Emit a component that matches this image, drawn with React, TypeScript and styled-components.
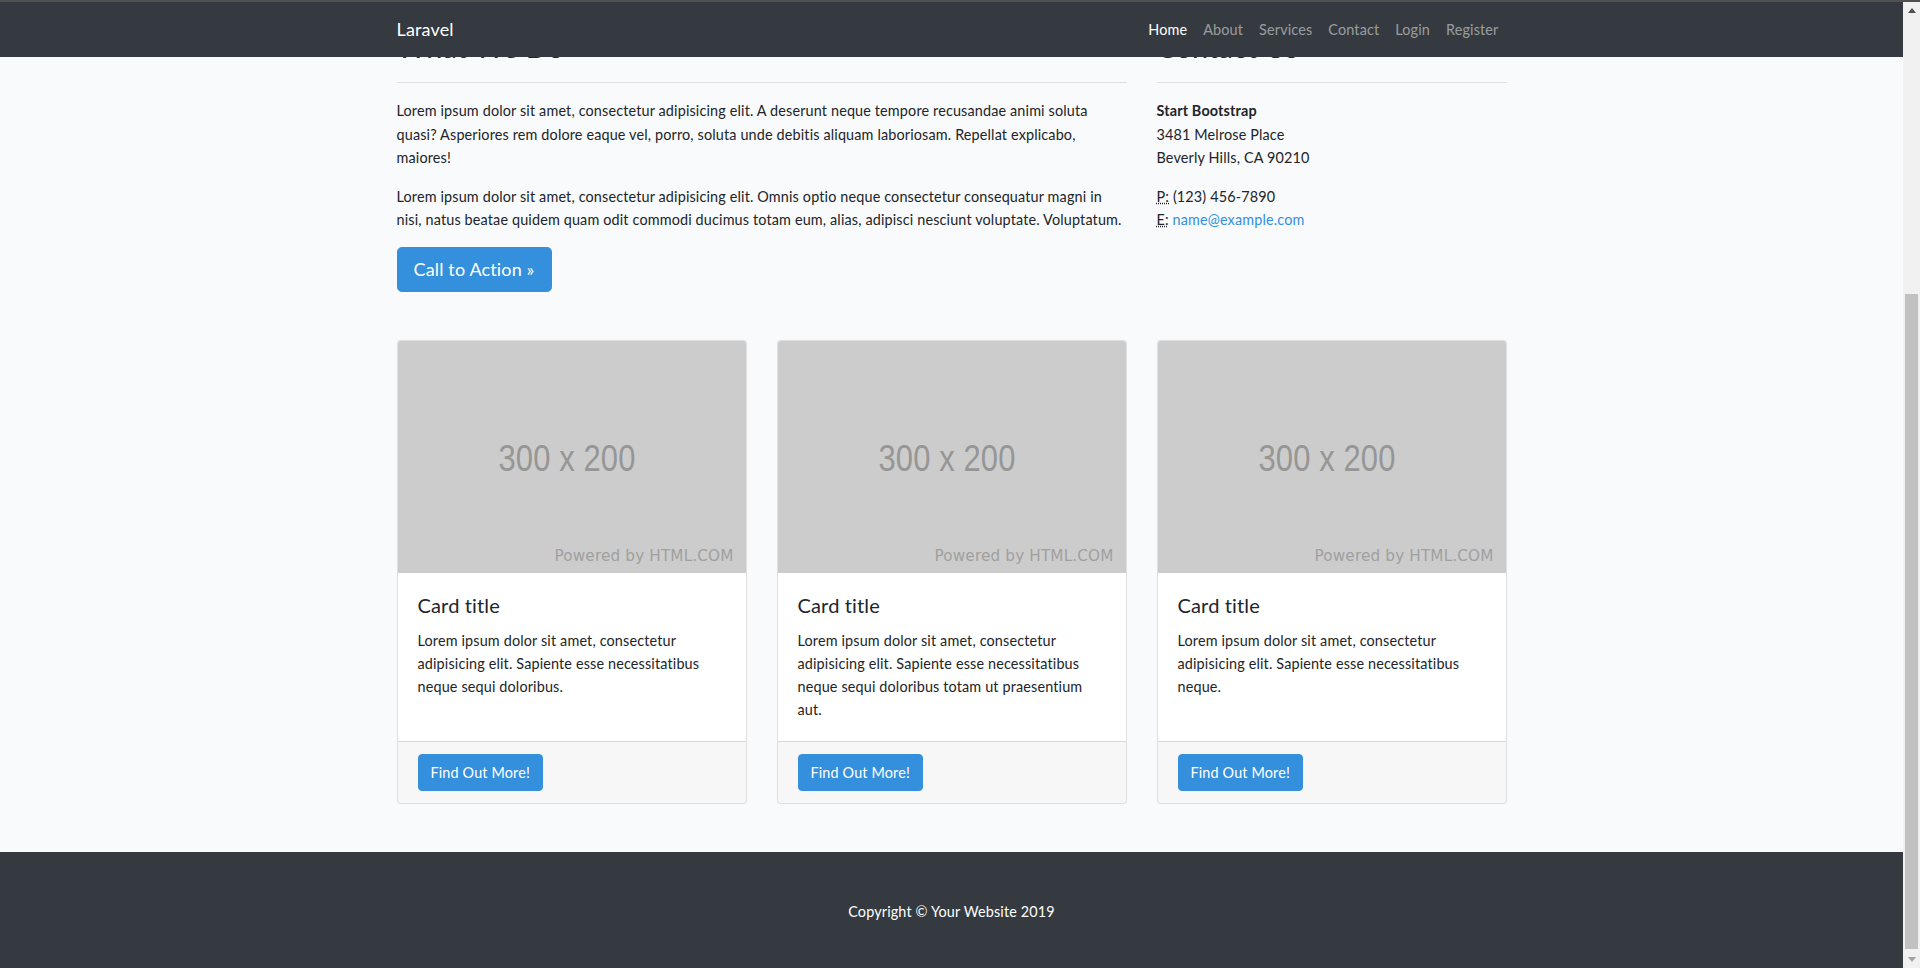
import { useLayoutEffect, useRef, useState } from "react";
import styled, { createGlobalStyle } from "styled-components";

const GlobalStyle = createGlobalStyle`
  html, body, #root {
    height: 100%;
  }
  body {
    margin: 0;
    overflow: hidden;
    font-family: "Lato", "Noto Sans", sans-serif;
    font-size: 14.4px;
    line-height: 1.6;
    letter-spacing: 0.15px;
    color: #212529;
    background-color: #f8fafc;
  }
  *, *::before, *::after {
    box-sizing: border-box;
  }
`;

type cardType = {
  id: number;
  text: string;
};

const cards: cardType[] = [
  {
    id: 1,
    text: "Lorem ipsum dolor sit amet, consectetur adipisicing elit. Sapiente esse necessitatibus neque sequi doloribus.",
  },
  {
    id: 2,
    text: "Lorem ipsum dolor sit amet, consectetur adipisicing elit. Sapiente esse necessitatibus neque sequi doloribus totam ut praesentium aut.",
  },
  {
    id: 3,
    text: "Lorem ipsum dolor sit amet, consectetur adipisicing elit. Sapiente esse necessitatibus neque.",
  },
];

const navItems = ["Home", "About", "Services", "Contact", "Login", "Register"];

function Placeholder() {
  // 300x200 placeholder picture (placehold.it style)
  return (
    <CardImg viewBox="0 0 348 232" preserveAspectRatio="none">
      <rect x="0" y="0" width="348" height="232" fill="#cccccc" />
      <text
        x="169"
        y="130"
        textAnchor="middle"
        fontFamily="'Liberation Sans', Arial, sans-serif"
        fontSize="37"
        fill="#969696"
        textLength="137"
        lengthAdjust="spacingAndGlyphs"
      >
        300 x 200
      </text>
      <text
        x="335.5"
        y="220"
        textAnchor="end"
        fontFamily="'DejaVu Sans', Verdana, sans-serif"
        fontSize="15"
        fill="#a0a0a0"
        textLength="179"
        lengthAdjust="spacingAndGlyphs"
      >
        Powered by HTML.COM
      </text>
    </CardImg>
  );
}

export default function App() {
  const paneRef = useRef<HTMLDivElement>(null);
  const [thumb, setThumb] = useState({ top: 0, height: 0 });

  useLayoutEffect(() => {
    const el = paneRef.current;
    if (!el) return;
    el.scrollTop = el.scrollHeight - el.clientHeight - 3;
    const track = el.clientHeight - 34;
    setThumb({
      top: (el.scrollTop / el.scrollHeight) * track,
      height: (el.clientHeight / el.scrollHeight) * track,
    });
  }, []);

  return (
    <>
      <GlobalStyle />
      <Frame>
        <TopEdge />
        <Viewport>
          <Pane ref={paneRef}>
            <Navbar>
              <NavInner>
                <Brand href="#">Laravel</Brand>
                <NavList>
                  {navItems.map((item, index) => (
                    <li key={item}>
                      <NavLink href="#" active={index === 0}>
                        {item}
                      </NavLink>
                    </li>
                  ))}
                </NavList>
              </NavInner>
            </Navbar>

            <Header>
              <Container>
                <HeaderTitle>Business Name or Tagline</HeaderTitle>
                <HeaderLead>
                  Lorem ipsum dolor sit amet, consectetur adipisicing elit.
                  Deleniti dolore necessitatibus, quae ipsum rerum.
                </HeaderLead>
              </Container>
            </Header>

            <Container>
              <Row>
                <Col span={8}>
                  <SectionTitle>What We Do</SectionTitle>
                  <Rule />
                  <Text>
                    Lorem ipsum dolor sit amet, consectetur adipisicing elit. A
                    deserunt neque tempore recusandae animi soluta quasi?
                    Asperiores rem dolore eaque vel, porro, soluta unde debitis
                    aliquam laboriosam. Repellat explicabo, maiores!
                  </Text>
                  <Text>
                    Lorem ipsum dolor sit amet, consectetur adipisicing elit.
                    Omnis optio neque consectetur consequatur magni in nisi,
                    natus beatae quidem quam odit commodi ducimus totam eum,
                    alias, adipisci nesciunt voluptate. Voluptatum.
                  </Text>
                  <Button href="#" size="lg">
                    Call to Action &raquo;
                  </Button>
                </Col>
                <Col span={4}>
                  <SectionTitle>Contact Us</SectionTitle>
                  <Rule />
                  <Address>
                    <strong>Start Bootstrap</strong>
                    <br />
                    3481 Melrose Place
                    <br />
                    Beverly Hills, CA 90210
                    <br />
                  </Address>
                  <Address>
                    <Abbr title="Phone">P:</Abbr> (123) 456-7890
                    <br />
                    <Abbr title="Email">E:</Abbr>{" "}
                    <MailLink href="#">name@example.com</MailLink>
                  </Address>
                </Col>
              </Row>

              <Row>
                {cards.map((card) => (
                  <Col span={4} key={card.id}>
                    <Card>
                      <Placeholder />
                      <CardBody>
                        <CardTitle>Card title</CardTitle>
                        <CardText>{card.text}</CardText>
                      </CardBody>
                      <CardFooter>
                        <Button href="#">Find Out More!</Button>
                      </CardFooter>
                    </Card>
                  </Col>
                ))}
              </Row>
            </Container>

            <Footer>
              <Copyright>Copyright &copy; Your Website 2019</Copyright>
            </Footer>
          </Pane>

          <ScrollBar>
            <ScrollArrow>
              <svg width="8" height="5" viewBox="0 0 8 5">
                <polygon points="4,0 8,5 0,5" fill="#505050" />
              </svg>
            </ScrollArrow>
            <ScrollTrack>
              <ScrollThumb
                style={{ top: thumb.top, height: thumb.height }}
              />
            </ScrollTrack>
            <ScrollArrow>
              <svg width="8" height="5" viewBox="0 0 8 5">
                <polygon points="0,0 8,0 4,5" fill="#a3a3a3" />
              </svg>
            </ScrollArrow>
          </ScrollBar>
        </Viewport>
      </Frame>
    </>
  );
}

const Frame = styled.div`
  height: 100vh;
  display: flex;
  flex-direction: column;
`;

const TopEdge = styled.div`
  flex: none;
  height: 2px;
  background-color: #515151;
`;

const Viewport = styled.div`
  flex: 1;
  min-height: 0;
  display: flex;
`;

const Pane = styled.div`
  flex: 1;
  min-width: 0;
  overflow: hidden;
  background-color: #f8fafc;
`;

const Navbar = styled.nav`
  position: sticky;
  top: 0;
  z-index: 10;
  background-color: #343a40;
  padding: 8px 16px;
`;

const NavInner = styled.div`
  max-width: 1140px;
  margin: 0 auto;
  padding: 0 15px;
  display: flex;
  align-items: center;
  justify-content: space-between;
`;

const Brand = styled.a`
  color: #fff;
  font-size: 18px;
  line-height: 1.6;
  padding: 5px 0;
  text-decoration: none;
`;

const NavList = styled.ul`
  list-style: none;
  margin: 0;
  padding: 0;
  display: flex;
`;

const NavLink = styled.a<{ active?: boolean }>`
  display: block;
  padding: 8px;
  color: ${(props) => (props.active ? "#fff" : "rgba(255, 255, 255, 0.5)")};
  text-decoration: none;
`;

const Header = styled.header`
  height: 329px;
  overflow: hidden;
  margin-bottom: 48px;
  padding: 48px 0;
  background-color: #3490dc;
`;

const HeaderTitle = styled.h1`
  margin: 48px 0 8px;
  color: #fff;
  font-size: 50px;
  font-weight: 300;
  line-height: 1.2;
`;

const HeaderLead = styled.p`
  margin: 0;
  color: rgba(255, 255, 255, 0.5);
  font-size: 18px;
  font-weight: 300;
`;

const Container = styled.div`
  max-width: 1140px;
  margin: 0 auto;
  padding: 0 15px;
`;

const Row = styled.div`
  display: flex;
  margin: 0 -15px;
`;

const Col = styled.div<{ span: number }>`
  flex: 0 0 ${(props) => (props.span / 12) * 100}%;
  max-width: ${(props) => (props.span / 12) * 100}%;
  padding: 0 15px;
  margin-bottom: 48px;
`;

const SectionTitle = styled.h2`
  margin: 0 0 8px;
  font-size: 28.8px;
  font-weight: 400;
  line-height: 1.3;
`;

const Rule = styled.hr`
  margin: 16px 0;
  border: 0;
  border-top: 1px solid rgba(0, 0, 0, 0.1);
`;

const Text = styled.p`
  margin: 0 0 16px;
`;

const Button = styled.a<{ size?: "lg" }>`
  display: inline-block;
  color: #fff;
  background-color: #3490dc;
  border: 1px solid #3490dc;
  text-decoration: none;
  font-size: ${(props) => (props.size === "lg" ? "18px" : "14.4px")};
  line-height: ${(props) => (props.size === "lg" ? 1.5 : 1.6)};
  padding: ${(props) => (props.size === "lg" ? "8px 16px" : "6px 12px")};
  border-radius: ${(props) => (props.size === "lg" ? "4.8px" : "4px")};
`;

const Address = styled.address`
  margin: 0 0 16px;
  font-style: normal;
  line-height: inherit;

  strong {
    font-weight: 700;
  }
`;

const Abbr = styled.abbr`
  text-decoration: underline dotted;
  text-decoration-skip-ink: none;
  cursor: help;
`;

const MailLink = styled.a`
  color: #3490dc;
  text-decoration: none;
`;

const Card = styled.div`
  height: 100%;
  display: flex;
  flex-direction: column;
  background-color: #fff;
  border: 1px solid rgba(0, 0, 0, 0.125);
  border-radius: 4px;
  overflow: hidden;
`;

const CardImg = styled.svg`
  display: block;
  width: 100%;
  height: auto;
  aspect-ratio: 3 / 2;
`;

const CardBody = styled.div`
  flex: 1 1 auto;
  padding: 20px;
`;

const CardTitle = styled.h5`
  margin: 0 0 12px;
  font-size: 20px;
  font-weight: 400;
  line-height: 1.2;
`;

const CardText = styled.p`
  margin: 0;
`;

const CardFooter = styled.div`
  padding: 12px 20px;
  background-color: rgba(0, 0, 0, 0.03);
  border-top: 1px solid rgba(0, 0, 0, 0.125);
`;

const Footer = styled.footer`
  padding: 48px 0;
  background-color: #343a40;
`;

const Copyright = styled.p`
  margin: 0;
  color: #fff;
  text-align: center;
`;

const ScrollBar = styled.div`
  flex: none;
  width: 17px;
  display: flex;
  flex-direction: column;
  background-color: #f1f1f1;
`;

const ScrollArrow = styled.div`
  flex: none;
  height: 17px;
  display: flex;
  align-items: center;
  justify-content: center;
`;

const ScrollTrack = styled.div`
  flex: 1;
  position: relative;
`;

const ScrollThumb = styled.div`
  position: absolute;
  left: 2px;
  right: 2px;
  background-color: #c1c1c1;
`;
